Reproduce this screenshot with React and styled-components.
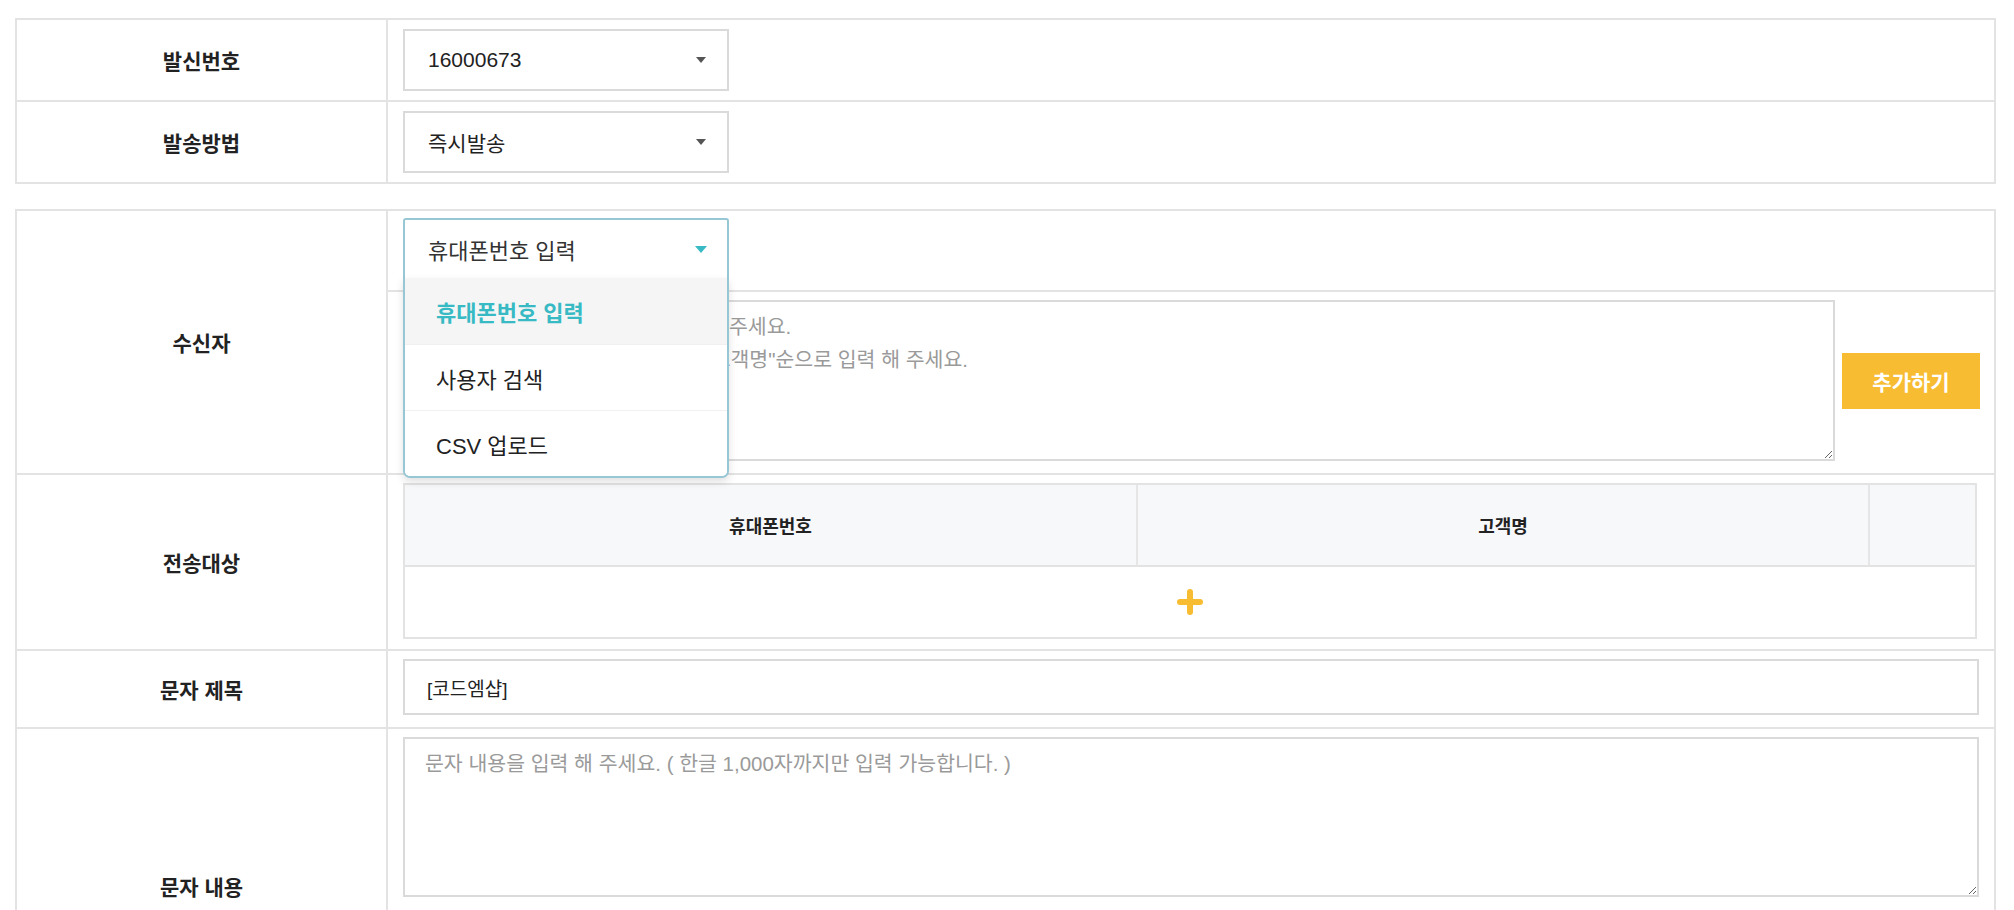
import React from 'react';
import styled, { createGlobalStyle } from 'styled-components';

const GlobalStyle = createGlobalStyle`
  * { box-sizing: border-box; }
  body {
    margin: 0;
    background: #fff;
    color: #222;
    font-family: "Liberation Sans", "Noto Sans CJK KR", sans-serif;
  }
`;

const Page = styled.div`
  padding: 18px 18px 0 15px;
  display: flex;
  flex-direction: column;
  gap: 25px;
`;

const Table = styled.div`
  border: 2px solid #e3e3e3;
  background: #fff;
`;

const Row = styled.div`
  display: grid;
  grid-template-columns: 371px 1fr;
  & + & {
    border-top: 2px solid #e3e3e3;
  }
`;

const Label = styled.div`
  display: flex;
  align-items: center;
  justify-content: center;
  border-right: 2px solid #e3e3e3;
  font-size: 21px;
  font-weight: 700;
  color: #222;
`;

const Cell = styled.div`
  padding: ${p => p.$pad || '9px 15px'};
  display: flex;
  align-items: ${p => (p.$top ? 'flex-start' : 'center')};
  gap: 7px;
  & + & {
    border-top: 2px solid #e3e3e3;
  }
`;

const Stack = styled.div`
  display: flex;
  flex-direction: column;
`;

const Caret = styled.span`
  width: 0;
  height: 0;
  border-left: ${p => p.$size}px solid transparent;
  border-right: ${p => p.$size}px solid transparent;
  border-top: ${p => p.$size + 1}px solid ${p => p.$color};
`;

const Select = styled.div`
  width: 326px;
  height: 62px;
  border: 2px solid #dadada;
  display: flex;
  align-items: center;
  justify-content: space-between;
  padding: 0 21px 0 23px;
  font-size: 21px;
  color: #222;
`;

const DropWrap = styled.div`
  position: relative;
  width: 326px;
`;

const DropHead = styled.div`
  height: 60px;
  border: 2px solid #97c6d5;
  border-bottom: none;
  border-radius: 3px 3px 0 0;
  display: flex;
  align-items: center;
  justify-content: space-between;
  padding: 0 20px 0 23px;
  font-size: 22px;
  color: #333;
  background: #fff;
`;

const DropList = styled.ul`
  position: absolute;
  top: 100%;
  left: 0;
  right: 0;
  margin: 0;
  padding: 0;
  list-style: none;
  background: #fff;
  border: 2px solid #97c6d5;
  border-top: none;
  border-radius: 0 0 7px 7px;
  box-shadow: 0 4px 8px rgba(0, 0, 0, 0.12);
  overflow: hidden;
  z-index: 10;
`;

const DropItem = styled.li`
  height: 66px;
  display: flex;
  align-items: center;
  padding-left: 31px;
  font-size: 22px;
  color: ${p => (p.$active ? '#38bac4' : '#222')};
  font-weight: ${p => (p.$active ? 700 : 400)};
  background: ${p => (p.$active ? '#f5f5f5' : '#fff')};
  & + & {
    border-top: 1px solid #f0f0f0;
  }
`;

const TextArea = styled.textarea`
  flex: 1;
  height: ${p => p.$h}px;
  border: 2px solid #dadada;
  padding: 8px 20px;
  font-family: inherit;
  font-size: 20.5px;
  line-height: 33px;
  color: #222;
  outline: none;
  &::placeholder {
    color: #9a9a9a;
  }
`;

const Input = styled.input`
  flex: 1;
  height: 56px;
  border: 2px solid #dadada;
  padding: 0 22px;
  font-family: inherit;
  font-size: 19px;
  color: #222;
  outline: none;
`;

const AddButton = styled.button`
  width: 138px;
  height: 56px;
  border: none;
  background: #f7bc31;
  color: #fff;
  font-family: inherit;
  font-size: 21px;
  font-weight: 700;
`;

const Grid = styled.div`
  flex: 1;
  border: 2px solid #e3e3e3;
`;

const GridHead = styled.div`
  display: grid;
  grid-template-columns: 731px 732px 1fr;
  height: 82px;
  background: #f7f8fa;
  border-bottom: 2px solid #e3e3e3;
`;

const HeadCell = styled.div`
  display: flex;
  align-items: center;
  justify-content: center;
  font-size: 18px;
  font-weight: 700;
  color: #222;
  & + & {
    border-left: 2px solid #e6e6e6;
  }
`;

const GridBody = styled.div`
  height: 70px;
  display: flex;
  align-items: center;
  justify-content: center;
`;

const PlusIcon = () => (
  <svg width="26" height="26" viewBox="0 0 26 26">
    <path d="M13 3v20M3 13h20" stroke="#f7bc31" strokeWidth="6" strokeLinecap="round" />
  </svg>
);

const recipientHint =
  '휴대폰번호를 한 줄에 1개씩 입력해 주세요.\n여러 명 입력할 경우 "휴대폰번호, 고객명"순으로 입력 해 주세요.';

export default function App() {
  return (
    <>
      <GlobalStyle />
      <Page>
        <Table>
          <Row>
            <Label>발신번호</Label>
            <Cell>
              <Select>
                16000673
                <Caret $size={5} $color="#555" />
              </Select>
            </Cell>
          </Row>
          <Row>
            <Label>발송방법</Label>
            <Cell>
              <Select>
                즉시발송
                <Caret $size={5} $color="#555" />
              </Select>
            </Cell>
          </Row>
        </Table>

        <Table>
          <Row>
            <Label>수신자</Label>
            <Stack>
              <Cell $pad="7px 15px 12px">
                <DropWrap>
                  <DropHead>
                    휴대폰번호 입력
                    <Caret $size={6} $color="#38bac4" />
                  </DropHead>
                  <DropList>
                    <DropItem $active>휴대폰번호 입력</DropItem>
                    <DropItem>사용자 검색</DropItem>
                    <DropItem>CSV 업로드</DropItem>
                  </DropList>
                </DropWrap>
              </Cell>
              <Cell $pad="8px 14px 12px 15px">
                <TextArea $h={161} placeholder={recipientHint} />
                <AddButton>추가하기</AddButton>
              </Cell>
            </Stack>
          </Row>
          <Row>
            <Label>전송대상</Label>
            <Cell $pad="8px 17px 10px 15px">
              <Grid>
                <GridHead>
                  <HeadCell>휴대폰번호</HeadCell>
                  <HeadCell>고객명</HeadCell>
                  <HeadCell />
                </GridHead>
                <GridBody>
                  <PlusIcon />
                </GridBody>
              </Grid>
            </Cell>
          </Row>
          <Row>
            <Label>문자 제목</Label>
            <Cell $pad="8px 15px 12px">
              <Input defaultValue="[코드엠샵]" />
            </Cell>
          </Row>
          <Row>
            <Label>문자 내용</Label>
            <Cell $top $pad="8px 15px 146px">
              <TextArea
                $h={160}
                placeholder="문자 내용을 입력 해 주세요. ( 한글 1,000자까지만 입력 가능합니다. )"
              />
            </Cell>
          </Row>
        </Table>
      </Page>
    </>
  );
}
